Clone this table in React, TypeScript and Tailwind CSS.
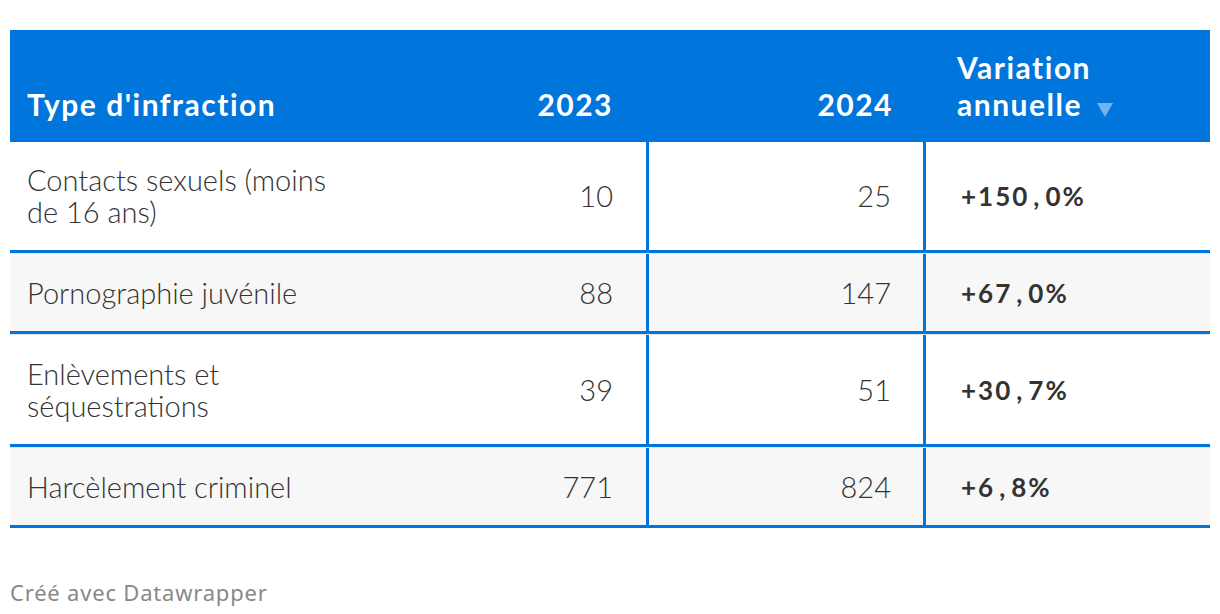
const rows = [
  { type: ["Contacts sexuels (moins", "de 16 ans)"], y2023: "10", y2024: "25", change: "+150,0%" },
  { type: ["Pornographie juvénile"], y2023: "88", y2024: "147", change: "+67,0%" },
  { type: ["Enlèvements et", "séquestrations"], y2023: "39", y2024: "51", change: "+30,7%" },
  { type: ["Harcèlement criminel"], y2023: "771", y2024: "824", change: "+6,8%" },
]

const cols = "grid grid-cols-[330px_306px_277px_1fr]"

function Change({ value }: { value: string }) {
  const [whole, decimals] = value.split(",")
  return (
    <span>
      {whole}
      <span className="inline-block w-[0.62em] text-center">,</span>
      {decimals}
    </span>
  )
}

export default function App() {
  return (
    <div
      className="w-[1220px] h-[614px] bg-white pt-[30px] px-[10px] text-[#333333]"
      style={{ fontFamily: "Lato, 'Noto Sans', sans-serif" }}
    >
      <div
        className={`${cols} bg-[#0075db] text-white font-bold text-[30px] leading-[37px] tracking-[1.5px] h-[112px] items-end pb-[19px]`}
      >
        <div className="pl-[17px]">Type d'infraction</div>
        <div className="text-right pr-[33px]">2023</div>
        <div className="text-right pr-[30px] border-l-[3px] border-transparent">2024</div>
        <div className="pl-[31px] border-l-[3px] border-transparent">
          Variation
          <br />
          annuelle
          <svg width="16" height="14" viewBox="0 0 16 14" className="inline-block ml-[15px] align-[-1px]">
            <path d="M0 0H16L8 14Z" fill="#ffffff" fillOpacity="0.45" />
          </svg>
        </div>
      </div>

      {rows.map((row, i) => (
        <div
          key={row.type.join(" ")}
          className={`${cols} text-[29px] leading-[32px] border-b-[3px] border-b-[#0075db] ${
            i % 2 === 1 ? "bg-[#f7f7f7]" : "bg-white"
          } ${i > 0 ? "border-t border-t-[#e4e4e4]" : ""}`}
        >
          <div className={`pl-[17px] font-light ${i > 0 ? "py-[22.5px]" : "py-[22px]"}`}>
            {row.type.map((line) => (
              <div key={line}>{line}</div>
            ))}
          </div>
          <div className="text-right pr-[33px] font-light self-center">{row.y2023}</div>
          <div className="text-right pr-[32px] border-l-[3px] border-[#0075db] flex items-center justify-end font-light">
            {row.y2024}
          </div>
          <div className="pl-[35px] border-l-[3px] border-[#0075db] flex items-center font-bold tracking-[2px] text-[26px]">
            <Change value={row.change} />
          </div>
        </div>
      ))}

      <div
        className="mt-[48px] text-[22px] tracking-[0.8px] text-[#888888]"
        style={{ fontFamily: "'Noto Sans', sans-serif" }}
      >
        Créé avec Datawrapper
      </div>
    </div>
  )
}
